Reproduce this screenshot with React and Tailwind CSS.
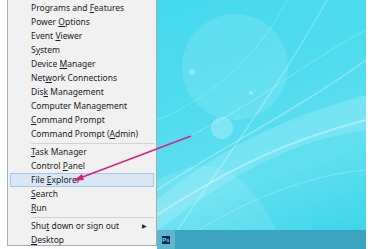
import React from "react";

const items1 = [
  ["Programs and ", "F", "eatures"],
  ["Power ", "O", "ptions"],
  ["Event ", "V", "iewer"],
  ["S", "y", "stem"],
  ["Device ", "M", "anager"],
  ["Net", "w", "ork Connections"],
  ["Dis", "k", " Management"],
  ["Computer Mana", "g", "ement"],
  ["", "C", "ommand Prompt"],
  ["Command Prompt (", "A", "dmin)"],
];
const items2 = [
  ["", "T", "ask Manager"],
  ["Control ", "P", "anel"],
  ["File ", "E", "xplorer", true],
  ["", "S", "earch"],
  ["", "R", "un"],
];
const items3 = [
  ["Shu", "t", " down or sign out", false, true],
  ["", "D", "esktop"],
];

function Item({ it }) {
  const [a, u, b, hl, sub] = it;
  return (
    <div
      className={
        "h-[14px] flex items-center pl-[20px] pr-[6px] mx-[2px] border " +
        (hl ? "bg-[#d8e6f5] border-[#a9c6e6]" : "border-transparent")
      }
    >
      <span className="flex-1 whitespace-nowrap">
        {a}
        <span className="underline underline-offset-[1px]">{u}</span>
        {b}
      </span>
      {sub && <span className="text-[6px] text-[#222]">▶</span>}
    </div>
  );
}

function Sep() {
  return (
    <div className="h-[4px] flex items-center pl-[23px] pr-[2px]">
      <div className="h-px w-full bg-[#d2d2d2]" />
    </div>
  );
}

export default function App() {
  return (
    <div className="relative w-[375px] h-[249px] bg-white flex overflow-hidden">
      <div className="w-[157px] h-full pl-[7px] flex flex-col">
        <div
          className="h-[246px] bg-[#f1f1f1] border border-[#9fb2c4] border-r-[#a8a8a8] border-t-0 text-[8.5px] text-[#1c1c1c] pt-[1px]"
          style={{ fontFamily: '"Noto Sans", "Open Sans", sans-serif' }}
        >
          {items1.map((it, i) => (
            <Item key={i} it={it} />
          ))}
          <Sep />
          {items2.map((it, i) => (
            <Item key={i} it={it} />
          ))}
          <Sep />
          {items3.map((it, i) => (
            <Item key={i} it={it} />
          ))}
        </div>
      </div>
      <div className="w-[209px] h-full flex flex-col bg-[#3bd6ea]">
        <div className="relative flex-1 overflow-hidden bg-[linear-gradient(160deg,#45d9ee_0%,#4fdcef_40%,#62e0f1_70%,#3dd5ea_100%)]">
          <svg className="absolute inset-0" width="209" height="231" viewBox="0 0 209 231">
            <circle cx="78" cy="67" r="53" fill="#ffffff" opacity="0.12" />
            <circle cx="65" cy="128" r="11" fill="#ffffff" opacity="0.25" />
            <circle cx="35" cy="72" r="3" fill="#ffffff" opacity="0.3" />
            <circle cx="94" cy="93" r="2" fill="#ffffff" opacity="0.3" />
            <path d="M0 200 C60 150 120 120 209 95 L209 130 C140 140 80 170 0 231 Z" fill="#ffffff" opacity="0.16" />
            <path d="M0 215 C70 170 130 140 209 120" stroke="#ffffff" strokeWidth="2" fill="none" opacity="0.35" />
            <path d="M0 190 C60 150 140 110 209 60" stroke="#ffffff" strokeWidth="1.5" fill="none" opacity="0.3" />
            <path d="M20 231 C60 170 120 90 170 0" stroke="#ffffff" strokeWidth="1.2" fill="none" opacity="0.3" />
            <path d="M0 150 C80 120 150 60 209 30" stroke="#ffffff" strokeWidth="1" fill="none" opacity="0.25" />
            <path d="M40 231 C90 200 150 175 209 170" stroke="#ffffff" strokeWidth="1" fill="none" opacity="0.25" />
            <path d="M0 120 C50 100 100 60 130 0" stroke="#ffffff" strokeWidth="1" fill="none" opacity="0.2" />
            <path d="M0 231 L0 180 C40 160 80 150 120 231 Z" fill="#ffffff" opacity="0.1" />
          </svg>
        </div>
        <div className="h-[19px] bg-[#3ba3bf] flex">
          <div className="w-[18px] h-full bg-[#5cb6cc] flex items-center justify-center">
            <div
              className="w-[10px] h-[10px] bg-[#0f2b47] border border-[#5ab4e6] text-[#7fd0ff] text-[6px] font-bold flex items-center justify-center leading-none"
              style={{ fontFamily: '"Liberation Sans", sans-serif' }}
            >
              Ps
            </div>
          </div>
        </div>
      </div>
      <div className="w-[9px] h-full bg-white" />
      <svg className="absolute inset-0 pointer-events-none" width="375" height="249" viewBox="0 0 375 249">
        <line x1="191" y1="136" x2="80" y2="178" stroke="#d5217c" strokeWidth="1.4" />
        <polygon points="73,181 82,174 84,180" fill="#d5217c" />
      </svg>
    </div>
  );
}
